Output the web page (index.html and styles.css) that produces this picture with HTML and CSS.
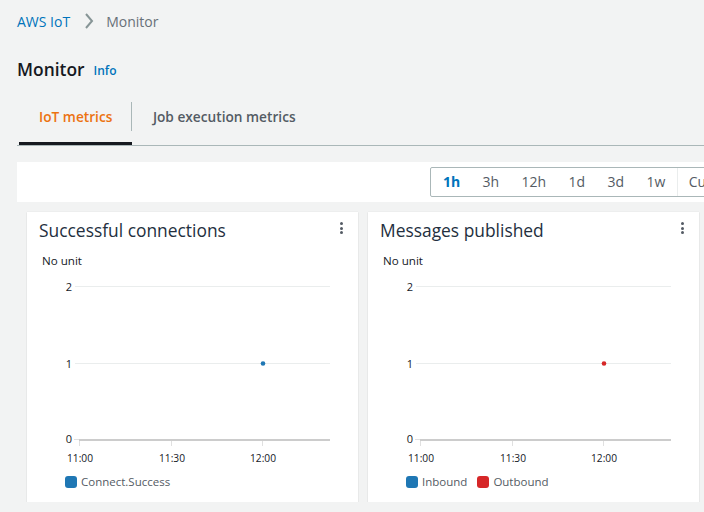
FILE: index.html
```html
<!DOCTYPE html>
<html lang="en">
<head>
<meta charset="utf-8">
<title>Monitor</title>
<link rel="stylesheet" href="styles.css">
</head>
<body>
<div class="page">
  <nav class="breadcrumbs">
    <a class="crumb-link" href="#">AWS IoT</a>
    <svg class="crumb-sep" width="10" height="16" viewBox="0 0 10 16"><polyline points="2,1 8,8 2,15" fill="none" stroke="#879596" stroke-width="2"/></svg>
    <span class="crumb-current">Monitor</span>
  </nav>

  <header class="page-header">
    <h1 class="page-title">Monitor</h1>
    <a class="info-link" href="#">Info</a>
  </header>

  <div class="tabs">
    <div class="tab tab-active"><span class="tab-label tab-label-divided">IoT metrics</span></div>
    <div class="tab"><span class="tab-label">Job execution metrics</span></div>
  </div>

  <div class="toolbar">
    <div class="range">
      <span class="range-btn range-btn-active">1h</span>
      <span class="range-btn">3h</span>
      <span class="range-btn">12h</span>
      <span class="range-btn">1d</span>
      <span class="range-btn">3d</span>
      <span class="range-btn">1w</span>
      <span class="range-btn range-btn-custom">Custom</span>
    </div>
  </div>

  <div class="cards">
    <section class="card">
      <div class="card-head">
        <h2 class="card-title">Successful connections</h2>
        <span class="kebab"><i></i><i></i><i></i></span>
      </div>
      <div class="unit">No unit</div>
      <svg class="chart" width="331" height="205" viewBox="0 0 331 205">
        <g class="grid">
          <line x1="48" y1="17.5" x2="303" y2="17.5"/>
          <line x1="48" y1="94.5" x2="303" y2="94.5"/>
        </g>
        <line class="ytick" x1="47" y1="170.5" x2="52" y2="170.5"/>
        <line class="baseline" x1="52" y1="171" x2="303" y2="171"/>
        <g class="xtick">
          <line x1="52.5" y1="172" x2="52.5" y2="177"/>
          <line x1="144.5" y1="172" x2="144.5" y2="177"/>
          <line x1="235.5" y1="172" x2="235.5" y2="177"/>
        </g>
        <g class="ylab">
          <text x="45" y="17.5">2</text>
          <text x="45" y="94.5">1</text>
          <text x="45" y="169.5">0</text>
        </g>
        <g class="xlab">
          <text x="53" y="189">11:00</text>
          <text x="145" y="189">11:30</text>
          <text x="236" y="189">12:00</text>
        </g>
        <circle cx="236" cy="94.5" r="2.3" fill="#1f77b4"/>
      </svg>
      <div class="legend">
        <span class="legend-item"><i class="swatch swatch-blue"></i>Connect.Success</span>
      </div>
    </section>

    <section class="card">
      <div class="card-head">
        <h2 class="card-title">Messages published</h2>
        <span class="kebab"><i></i><i></i><i></i></span>
      </div>
      <div class="unit">No unit</div>
      <svg class="chart" width="331" height="205" viewBox="0 0 331 205">
        <g class="grid">
          <line x1="48" y1="17.5" x2="303" y2="17.5"/>
          <line x1="48" y1="94.5" x2="303" y2="94.5"/>
        </g>
        <line class="ytick" x1="47" y1="170.5" x2="52" y2="170.5"/>
        <line class="baseline" x1="52" y1="171" x2="303" y2="171"/>
        <g class="xtick">
          <line x1="52.5" y1="172" x2="52.5" y2="177"/>
          <line x1="144.5" y1="172" x2="144.5" y2="177"/>
          <line x1="235.5" y1="172" x2="235.5" y2="177"/>
        </g>
        <g class="ylab">
          <text x="45" y="17.5">2</text>
          <text x="45" y="94.5">1</text>
          <text x="45" y="169.5">0</text>
        </g>
        <g class="xlab">
          <text x="53" y="189">11:00</text>
          <text x="145" y="189">11:30</text>
          <text x="236" y="189">12:00</text>
        </g>
        <circle cx="236" cy="94.5" r="2.3" fill="#d62728"/>
      </svg>
      <div class="legend">
        <span class="legend-item"><i class="swatch swatch-blue"></i>Inbound</span>
        <span class="legend-item"><i class="swatch swatch-red"></i>Outbound</span>
      </div>
    </section>
  </div>
</div>
</body>
</html>
```

FILE: styles.css
```css
html, body {
  margin: 0;
  padding: 0;
  background: #f2f3f3;
  overflow: hidden;
}
body {
  font-family: "Open Sans", "Noto Sans", sans-serif;
  color: #16191f;
}
.page {
  width: 1100px;
  padding-left: 17px;
}
.breadcrumbs {
  height: 42px;
  display: flex;
  align-items: center;
  font-size: 14px;
}
.crumb-link {
  color: #0073bb;
  text-decoration: none;
}
.crumb-sep {
  margin: 0 12px 0 14px;
}
.crumb-current {
  color: #687078;
}
.page-header {
  margin-top: 16px;
  height: 22px;
  display: flex;
  align-items: center;
}
.page-title {
  margin: 0;
  font-size: 17.4px;
  line-height: 22px;
  font-weight: 600;
  color: #16191f;
}
.info-link {
  margin-left: 9px;
  margin-top: 3px;
  font-size: 12px;
  font-weight: 600;
  color: #0073bb;
  text-decoration: none;
}
.tabs {
  margin-top: 18px;
  display: flex;
  padding-left: 2px;
  border-bottom: 1px solid #aab7b8;
}
.tab {
  padding-top: 4px;
  padding-bottom: 11px;
  border-bottom: 3px solid transparent;
  font-size: 13.7px;
  font-weight: 600;
  color: #545b64;
}
.tab-active {
  border-bottom-color: #16191f;
  color: #ec7211;
}
.tab-label {
  display: block;
  height: 29px;
  line-height: 29px;
  padding: 0 20px 0 21px;
}
.tab-active .tab-label {
  padding: 0 18.5px 0 20px;
}
.tab-label-divided {
  border-right: 1px solid #aab7b8;
}
.toolbar {
  margin-top: 16px;
  height: 40px;
  background: #fff;
  display: flex;
  align-items: center;
  padding-left: 413px;
}
.range {
  display: flex;
  height: 28px;
  border: 1px solid #aab7b8;
  border-radius: 2px;
  font-size: 14px;
  color: #545b64;
}
.range-btn {
  padding: 0 11.2px;
  line-height: 28px;
}
.range-btn-active {
  color: #0073bb;
  font-weight: 700;
  padding: 0 11.2px 0 12px;
}
.range-btn-custom {
  border-left: 1px solid #eaeded;
}
.cards {
  margin-top: 10px;
  margin-left: 10px;
  display: grid;
  grid-template-columns: 331px 331px;
  column-gap: 10px;
}
.card {
  background: #fff;
  height: 290px;
  box-shadow: 0 1px 1px rgba(0, 28, 36, 0.12), 0 0 1px rgba(0, 28, 36, 0.12);
}
.card-head {
  padding: 7px 12px 0 12px;
  height: 22px;
  display: flex;
  justify-content: space-between;
  align-items: center;
}
.card-title {
  margin: 0;
  font-size: 17.4px;
  line-height: 22px;
  font-weight: 400;
  color: #232f3e;
}
.kebab {
  display: flex;
  flex-direction: column;
  gap: 1.5px;
  margin-right: 3px;
  margin-top: -4px;
}
.kebab i {
  display: block;
  width: 3px;
  height: 3px;
  border-radius: 50%;
  background: #545b64;
}
.unit {
  margin-top: 12px;
  padding-left: 15px;
  font-size: 11.6px;
  line-height: 16px;
  color: #16191f;
}
.chart {
  display: block;
}
.grid line {
  stroke: #eaeded;
  stroke-width: 1;
}
.baseline {
  stroke: #cccccc;
  stroke-width: 2;
}
.ytick {
  stroke: #e0e0e0;
  stroke-width: 1;
}
.xtick line {
  stroke: #e0e0e0;
  stroke-width: 1;
}
.ylab text {
  font-family: "Open Sans", sans-serif;
  font-size: 11px;
  fill: #16191f;
  text-anchor: end;
  dominant-baseline: central;
}
.xlab text {
  font-family: "Open Sans", sans-serif;
  font-size: 10.2px;
  fill: #16191f;
  text-anchor: middle;
  dominant-baseline: central;
}
.legend {
  padding-left: 38px;
  display: flex;
  gap: 10px;
  font-size: 11.5px;
  line-height: 16px;
  color: #545b64;
}
.legend-item {
  display: flex;
  align-items: center;
}
.swatch {
  display: block;
  width: 12px;
  height: 12px;
  border-radius: 3px;
  margin-right: 4px;
}
.swatch-blue {
  background: #1f77b4;
}
.swatch-red {
  background: #d62728;
}
```
